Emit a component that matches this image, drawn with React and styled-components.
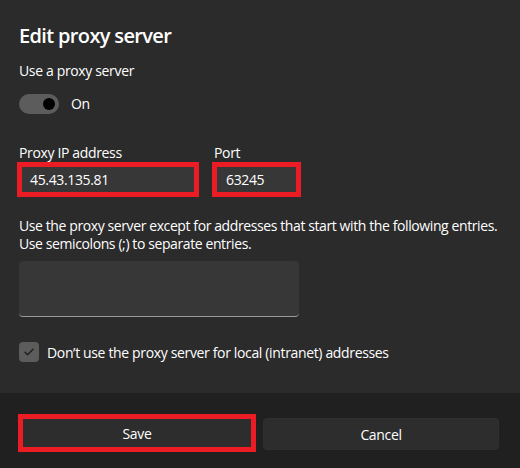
import React from "react";
import styled, { createGlobalStyle } from "styled-components";

const Global = createGlobalStyle`
  html, body { margin: 0; padding: 0; background: #2b2b2b; }
  * { box-sizing: border-box; }
`;

const Page = styled.div`
  width: 520px;
  height: 468px;
  display: flex;
  flex-direction: column;
  font-family: "Open Sans", "Noto Sans", sans-serif;
  letter-spacing: -0.35px;
  color: #ffffff;
`;

const Content = styled.div`
  height: 393px;
  background: #2b2b2b;
  padding: 22px 19px 0 19px;
  display: flex;
  flex-direction: column;
`;

const Title = styled.h1`
  margin: 0;
  font-size: 20px;
  font-weight: 600;
  line-height: 28px;
  letter-spacing: -0.65px;
`;

const Label = styled.div`
  font-size: 14px;
  line-height: 20px;
  margin-top: ${(p) => p.$mt || 0}px;
`;

const ToggleRow = styled.div`
  display: flex;
  align-items: center;
  gap: 12px;
  margin-top: 13px;
  height: 20px;
`;

const Track = styled.div`
  width: 40px;
  height: 20px;
  border-radius: 10px;
  background: #5c5c5c;
  position: relative;
`;

const Knob = styled.div`
  position: absolute;
  width: 12px;
  height: 12px;
  border-radius: 50%;
  background: #000;
  top: 4px;
  right: 4px;
`;

const ToggleText = styled.span`
  font-size: 14px;
  line-height: 20px;
`;

const FieldRow = styled.div`
  display: flex;
  gap: 13px;
  margin-top: 30px;
  margin-left: -2px;
`;

const Field = styled.div`
  display: flex;
  flex-direction: column;
`;

const FieldLabel = styled.div`
  font-size: 14px;
  line-height: 18px;
  padding-left: 2px;
`;

const RedInput = styled.div`
  width: ${(p) => p.$w}px;
  height: 35px;
  border: 5px solid #ec1c24;
  background: #373737;
  font-size: 14px;
  display: flex;
  align-items: center;
  padding-left: ${(p) => p.$pl}px;
`;

const Description = styled.div`
  font-size: 14px;
  line-height: 18px;
  margin-top: 20px;
  white-space: nowrap;
  letter-spacing: -0.4px;
`;

const TextArea = styled.div`
  width: 280px;
  height: 56px;
  margin-top: 8px;
  background: #373737;
  border-radius: 4px;
  border-bottom: 1px solid #9a9a9a;
`;

const CheckRow = styled.div`
  display: flex;
  align-items: center;
  gap: 8px;
  margin-top: 25px;
  height: 20px;
  font-size: 14px;
`;

const CheckBox = styled.div`
  width: 20px;
  height: 20px;
  border-radius: 4px;
  background: #5c5c5c;
  display: flex;
  align-items: center;
  justify-content: center;
`;

const Footer = styled.div`
  flex: 1;
  background: #202020;
  display: flex;
  align-items: flex-start;
  gap: 7px;
  padding: 21px 21px 0 18px;
`;

const Button = styled.div`
  height: ${(p) => (p.$outlined ? 38 : 32)}px;
  width: ${(p) => (p.$outlined ? 238 : 236)}px;
  margin-top: ${(p) => (p.$outlined ? 0 : 4)}px;
  background: #2d2d2d;
  border-radius: ${(p) => (p.$outlined ? 0 : 4)}px;
  border: ${(p) => (p.$outlined ? "5px solid #ec1c24" : "1px solid #303030")};
  display: flex;
  align-items: center;
  justify-content: center;
  font-size: 14px;
  color: #fff;
`;

export default function App() {
  return (
    <Page>
      <Global />
      <Content>
        <Title>Edit proxy server</Title>
        <Label $mt={11}>Use a proxy server</Label>
        <ToggleRow>
          <Track>
            <Knob />
          </Track>
          <ToggleText>On</ToggleText>
        </ToggleRow>
        <FieldRow>
          <Field>
            <FieldLabel>Proxy IP address</FieldLabel>
            <RedInput $w={182} $pl={8}>45.43.135.81</RedInput>
          </Field>
          <Field>
            <FieldLabel>Port</FieldLabel>
            <RedInput $w={89} $pl={9}>63245</RedInput>
          </Field>
        </FieldRow>
        <Description>
          Use the proxy server except for addresses that start with the following entries.
          <br />
          Use semicolons (;) to separate entries.
        </Description>
        <TextArea />
        <CheckRow>
          <CheckBox>
            <svg width="12" height="12" viewBox="0 0 12 12">
              <path d="M2 6.3 L4.6 8.8 L10 3.2" fill="none" stroke="#1e1e1e" strokeWidth="1.3" strokeLinecap="round" strokeLinejoin="round" />
            </svg>
          </CheckBox>
          <span>Don’t use the proxy server for local (intranet) addresses</span>
        </CheckRow>
      </Content>
      <Footer>
        <Button $outlined>Save</Button>
        <Button>Cancel</Button>
      </Footer>
    </Page>
  );
}
